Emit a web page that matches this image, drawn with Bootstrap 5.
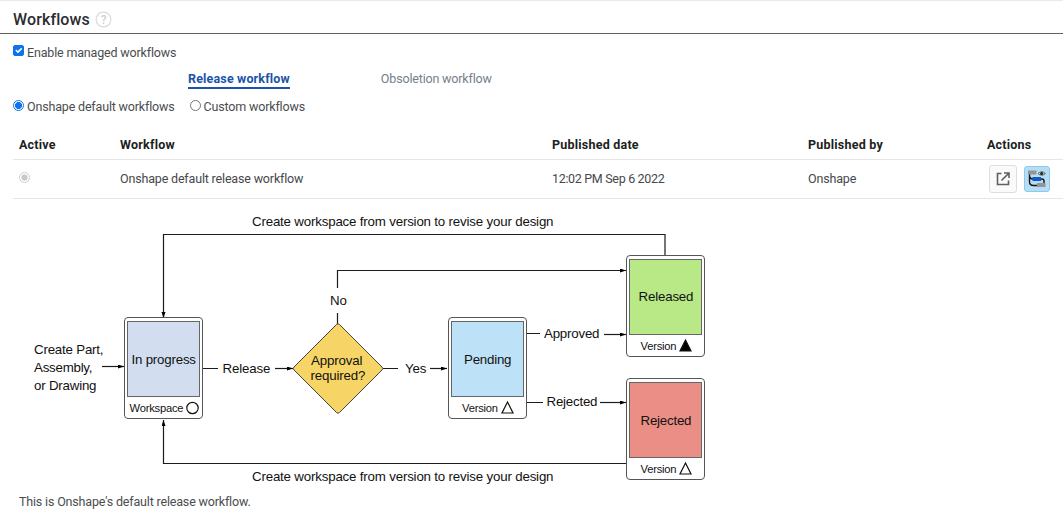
<!DOCTYPE html>
<html lang="en">
<head>
<meta charset="utf-8">
<meta name="viewport" content="width=device-width, initial-scale=1">
<title>Workflows</title>
<link href="https://cdn.jsdelivr.net/npm/bootstrap@5.3.0/dist/css/bootstrap.min.css" rel="stylesheet">
<style>
  body { font-family: Roboto, "Liberation Sans", sans-serif; font-size: 12.5px; line-height: 18px; letter-spacing: -.17px; color: #4a4d50; height: 515px; overflow: hidden; border-top: 1px solid #e9e9e9; }
  .page-head { height: 33px; padding: 9px 0 0 13px; border-bottom: 1px solid #5f6360; }
  .page-title { font-size: 16px; line-height: 20px; font-weight: 500; color: #2b2d30; letter-spacing: .12px; }
  .help-icon { margin: 1px 0 0 5px; }
  .opt { height: 20px; padding-left: 13px; }
  .opt + .opt { padding-left: 15px; }
  .opt .form-check-input { width: 11px; height: 11px; margin: 0 3px 3px 0; flex: none; border-color: #767676; opacity: 1; }
  .opt .form-check-input:checked { border-color: #0f73ee; background-color: #0f73ee; }
  .opt input[type=checkbox] { border-radius: 2px; }
  .opt input[type=checkbox]:checked { background-size: 11px 11px; }
  .opt input.dot:checked { background-color: #fff; background-image: radial-gradient(circle, #0f73ee 0 3.2px, transparent 3.8px); background-size: 100% 100%; }
  .enable-text { padding-top: 2px; }
  .tabs-row { height: 27px; padding-left: 188px; }
  .tab-link { height: 19px; white-space: nowrap; color: #74808a; text-decoration: none; letter-spacing: -.17px; }
  .tab-link.current { color: #1b53ab; font-weight: 700; border-bottom: 2px solid #1b53ab; letter-spacing: .16px; margin-right: 91px; }
  .flow-table { margin: 13px 0 0 13px; width: 1050px; table-layout: fixed; color: #45484b; }
  .flow-table > :not(caption) > * > * { padding: 0 0 0 6px; border-bottom: 1px solid #e6e6e6; vertical-align: middle; background: none; color: inherit; }
  .flow-table > thead > tr > th { height: 29px; padding-top: 2px; font-weight: 700; color: #1c1e21; letter-spacing: .22px; }
  .flow-table td { height: 39px; }
  .flow-table > tbody > tr > td.date { letter-spacing: -.32px; }
  .off-dot { display: block; width: 11px; height: 11px; border: 1px solid #cfcfcf; border-radius: 50%; background: radial-gradient(circle, #c9c9c9 0 2.8px, #fff 3.4px); margin-bottom: 2px; }
  .tool-row { gap: 7px; padding-left: 2px; }
  .tool-btn { width: 28px; height: 28px; padding: 0; border: 1px solid #dedede; border-radius: 3px; background: #fafafa; }
  .tool-btn.on { width: 26px; height: 26px; background: #b5def5; border-color: #8ccbed; }
  .diagram { display: block; font-family: "Liberation Sans", Arial, sans-serif; font-size: 13.3px; letter-spacing: 0; }
  .diagram .sm { font-size: 11.2px; }
  .foot { padding-left: 19px; margin-top: 3px; }
</style>
</head>
<body>
<header class="page-head d-flex align-items-start">
  <span class="page-title">Workflows</span>
  <svg class="help-icon" width="17" height="17" viewBox="0 0 17 17"><circle cx="8.5" cy="8.5" r="7.4" fill="none" stroke="#dadada" stroke-width="1.2"/><text x="8.5" y="12.7" text-anchor="middle" font-size="12" font-weight="500" fill="#cfcfcf">?</text></svg>
</header>
<main>
  <label class="opt d-flex align-items-center mt-2"><input class="form-check-input" type="checkbox" checked><span class="enable-text">Enable managed workflows</span></label>
  <nav class="tabs-row d-flex mt-2">
    <a class="tab-link current" href="#">Release workflow</a>
    <a class="tab-link" href="#">Obsoletion workflow</a>
  </nav>
  <div class="d-flex">
    <label class="opt d-flex align-items-center"><input class="form-check-input dot" type="radio" name="kind" checked><span>Onshape default workflows</span></label>
    <label class="opt d-flex align-items-center"><input class="form-check-input dot" type="radio" name="kind"><span>Custom workflows</span></label>
  </div>
  <table class="table flow-table">
    <colgroup><col style="width:101px"><col style="width:432px"><col style="width:256px"><col style="width:179px"><col></colgroup>
    <thead><tr><th>Active</th><th>Workflow</th><th>Published date</th><th>Published by</th><th>Actions</th></tr></thead>
    <tbody><tr>
      <td><span class="off-dot"></span></td><td>Onshape default release workflow</td><td class="date">12:02 PM Sep 6 2022</td><td>Onshape</td>
      <td><div class="tool-row d-flex align-items-center">
        <button class="btn tool-btn d-flex align-items-center justify-content-center" aria-label="Open"><svg width="16" height="16" viewBox="0 0 16 16" fill="none" stroke="#606060" stroke-width="1.6"><path d="M6.500 2.500H2.500v11h11V9.500M9 2h5v5M14 2 6.500 9.500"/></svg></button>
        <button class="btn tool-btn on d-flex align-items-center justify-content-center" aria-label="Show diagram"><svg class="flex-shrink-0" width="20" height="20" viewBox="0 0 20 20"><path d="M2.500 5v7.500q0 4 4 4H10M2.500 6q0 4 3.500 4M13 10h2q2 0 2 2v2" fill="none" stroke="#151515" stroke-width="1.400"/><path d="M1 1.500h8.500v4H1zM10 14h8.500v4H10z" fill="#949494"/><path d="M5.500 8h8.500v4H5.500z" fill="#1559c4"/><path d="M11 4.500q3.500-3.500 7.500 0-4 3.500-7.500 0z" fill="#c5dce8" stroke="#555" stroke-width=".9"/><circle cx="14.700" cy="4.500" r="1.500" fill="#222"/></svg></button>
      </div></td>
    </tr></tbody>
  </table>
</main>
<svg class="diagram" width="720" height="291" viewBox="0 199 720 291">
  <defs>
    <marker id="tip" markerUnits="userSpaceOnUse" markerWidth="7" markerHeight="5" refX="6" refY="2" orient="auto"><path d="M0 0 6 2 0 4z" fill="#000"/></marker>
    <g id="state"><rect x=".5" y=".5" width="78" height="101" rx="3.500" fill="#fff" stroke="#555"/><rect x="3.500" y="4.500" width="72" height="75" fill="currentColor" stroke="#666"/></g>
  </defs>
  <g fill="none" stroke="#1c1c1c" stroke-width="1.200">
    <path d="M665 255V234.500H163.500V318" marker-end="url(#tip)"/>
    <path d="M627 463.500H163.500V420" marker-end="url(#tip)"/>
    <path d="M102 366.500h22" marker-end="url(#tip)"/>
    <path d="M203 368.500h15M383 368.500h15M527 333.500h13M527 402.500h16M337.500 325v-12" />
    <path d="M337.500 288v-17.500H626" marker-end="url(#tip)"/>
    <path d="M275 368.500h18" marker-end="url(#tip)"/><path d="M430 368.500h17" marker-end="url(#tip)"/>
    <path d="M604 334.500h22" marker-end="url(#tip)"/><path d="M600 402.500h26" marker-end="url(#tip)"/>
  </g>
  <use href="#state" x="124" y="317" color="#d2deef"/>
  <use href="#state" x="448" y="317" color="#bde1f6"/>
  <use href="#state" x="626" y="255" color="#b9e986"/>
  <use href="#state" x="626" y="378" color="#ea8e86"/>
  <path d="M336.500 324.500q1.500-1.500 3 0l42.500 42.500q1.500 1.500 0 3l-42.500 42.500q-1.500 1.500-3 0L294 370q-1.500-1.500 0-3z" fill="#f6d566" stroke="#444"/>
  <g fill="#fff" stroke="#111" stroke-width="1.200"><circle cx="192.500" cy="408" r="5.700"/><path d="M507.500 402 513 413h-11zM685.500 463l5.500 11h-11z"/><path d="M685.500 340l5.500 11h-11z" fill="#000"/></g>
  <g fill="#111">
    <text x="252" y="226" textLength="301.500">Create workspace from version to revise your design</text>
    <text x="252" y="481" textLength="301.500">Create workspace from version to revise your design</text>
    <text x="34" y="354" textLength="69.500">Create Part,</text><text x="34" y="372" textLength="58.500">Assembly,</text><text x="34" y="390" textLength="62.500">or Drawing</text>
    <text x="131.500" y="364" textLength="64.500">In progress</text><text x="222.500" y="373" textLength="48">Release</text>
    <text x="330" y="305" textLength="17">No</text><text x="311" y="365" textLength="51.500">Approval</text><text x="310.500" y="380" textLength="55">required?</text>
    <text x="405" y="373" textLength="21.500">Yes</text><text x="464" y="364" textLength="47.500">Pending</text><text x="544" y="338" textLength="55.500">Approved</text><text x="546.500" y="406" textLength="51">Rejected</text>
    <text x="638.500" y="301" textLength="55">Released</text><text x="640.500" y="425" textLength="51">Rejected</text>
    <g class="sm"><text x="129.500" y="412" textLength="54">Workspace</text><text x="462" y="412" textLength="36">Version</text><text x="640.500" y="350" textLength="36">Version</text><text x="640.500" y="473" textLength="36">Version</text></g>
  </g>
</svg>
<p class="foot mb-0">This is Onshape's default release workflow.</p>
<script src="https://cdn.jsdelivr.net/npm/bootstrap@5.3.0/dist/js/bootstrap.bundle.min.js"></script>
</body>
</html>
